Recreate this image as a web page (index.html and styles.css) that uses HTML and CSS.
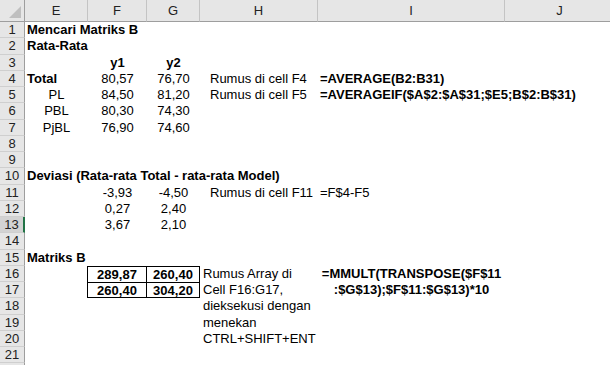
FILE: index.html
```html
<!DOCTYPE html>
<html>
<head>
<meta charset="utf-8">
<link rel="stylesheet" href="styles.css">
</head>
<body>
<div class="sheet">
  <div class="ch corner"><span class="tri"></span></div>
  <div class="ch">E</div><div class="ch">F</div><div class="ch">G</div><div class="ch">H</div><div class="ch">I</div><div class="ch">J</div>

  <div class="rh">1</div><div class="c b">Mencari Matriks B</div><div class="c"></div><div class="c"></div><div class="c"></div><div class="c"></div><div class="c"></div>
  <div class="rh">2</div><div class="c b">Rata-Rata</div><div class="c"></div><div class="c"></div><div class="c"></div><div class="c"></div><div class="c"></div>
  <div class="rh">3</div><div class="c"></div><div class="c b ctr">y1</div><div class="c b ctr">y2</div><div class="c"></div><div class="c"></div><div class="c"></div>
  <div class="rh">4</div><div class="c b">Total</div><div class="c ctr">80,57</div><div class="c ctr">76,70</div><div class="c ind">Rumus di cell F4</div><div class="c b">=AVERAGE(B2:B31)</div><div class="c"></div>
  <div class="rh">5</div><div class="c ctr">PL</div><div class="c ctr">84,50</div><div class="c ctr">81,20</div><div class="c ind">Rumus di cell F5</div><div class="c b">=AVERAGEIF($A$2:$A$31;$E5;B$2:B$31)</div><div class="c"></div>
  <div class="rh">6</div><div class="c ctr">PBL</div><div class="c ctr">80,30</div><div class="c ctr">74,30</div><div class="c"></div><div class="c"></div><div class="c"></div>
  <div class="rh">7</div><div class="c ctr">PjBL</div><div class="c ctr">76,90</div><div class="c ctr">74,60</div><div class="c"></div><div class="c"></div><div class="c"></div>
  <div class="rh">8</div><div class="c"></div><div class="c"></div><div class="c"></div><div class="c"></div><div class="c"></div><div class="c"></div>
  <div class="rh">9</div><div class="c"></div><div class="c"></div><div class="c"></div><div class="c"></div><div class="c"></div><div class="c"></div>
  <div class="rh">10</div><div class="c b">Deviasi (Rata-rata Total - rata-rata Model)</div><div class="c"></div><div class="c"></div><div class="c"></div><div class="c"></div><div class="c"></div>
  <div class="rh">11</div><div class="c"></div><div class="c ctr">-3,93</div><div class="c ctr">-4,50</div><div class="c ind">Rumus di cell F11</div><div class="c">=F$4-F5</div><div class="c"></div>
  <div class="rh">12</div><div class="c"></div><div class="c ctr">0,27</div><div class="c ctr">2,40</div><div class="c"></div><div class="c"></div><div class="c"></div>
  <div class="rh sel">13</div><div class="c"></div><div class="c ctr">3,67</div><div class="c ctr">2,10</div><div class="c"></div><div class="c"></div><div class="c"></div>
  <div class="rh">14</div><div class="c"></div><div class="c"></div><div class="c"></div><div class="c"></div><div class="c"></div><div class="c"></div>
  <div class="rh">15</div><div class="c b">Matriks B</div><div class="c"></div><div class="c"></div><div class="c"></div><div class="c"></div><div class="c"></div>
  <div class="rh">16</div><div class="c"></div><div class="c b ctr box tl">289,87</div><div class="c b ctr box tr">260,40</div><div class="c wrap span5">Rumus Array di<br>Cell F16:G17,<br>dieksekusi dengan<br>menekan<br>CTRL+SHIFT+ENT</div><div class="c b ctr wrap span2">=MMULT(TRANSPOSE($F$11<br>:$G$13);$F$11:$G$13)*10</div><div class="c"></div>
  <div class="rh">17</div><div class="c"></div><div class="c b ctr box bl">260,40</div><div class="c b ctr box br">304,20</div><div class="c"></div>
  <div class="rh">18</div><div class="c"></div><div class="c"></div><div class="c"></div><div class="c"></div><div class="c"></div>
  <div class="rh">19</div><div class="c"></div><div class="c"></div><div class="c"></div><div class="c"></div><div class="c"></div>
  <div class="rh">20</div><div class="c"></div><div class="c"></div><div class="c"></div><div class="c"></div><div class="c"></div>
  <div class="rh">21</div><div class="c"></div><div class="c"></div><div class="c"></div><div class="c"></div><div class="c"></div><div class="c"></div>
  <div class="rh"></div>
</div>
</body>
</html>
```
FILE: styles.css
```css
html, body {
  margin: 0;
  padding: 0;
  background: #fff;
  overflow: hidden;
}
body {
  font-family: "Liberation Sans", Arial, sans-serif;
  font-size: 13px;
  color: #000;
  width: 610px;
  height: 365px;
}
.sheet {
  display: grid;
  grid-template-columns: 25px 63px 59px 53px 118px 187px 110px;
  grid-template-rows: 22px repeat(21, 16.25px) 20px;
  width: 615px;
}
.ch {
  background: #e6e6e6;
  border-right: 1px solid #c4c4c4;
  border-bottom: 1px solid #9e9e9e;
  text-align: center;
  line-height: 22px;
  color: #222;
  box-sizing: border-box;
}
.corner {
  position: relative;
  border-right: 1px solid #9e9e9e;
}
.tri {
  position: absolute;
  right: 3px;
  bottom: 3px;
  width: 0;
  height: 0;
  border-left: 12px solid transparent;
  border-bottom: 12px solid #bfbfbf;
}
.rh {
  background: #e6e6e6;
  border-right: 1px solid #9e9e9e;
  border-bottom: 1px solid #cfcfcf;
  text-align: center;
  line-height: 16px;
  color: #222;
  box-sizing: border-box;
  overflow: hidden;
}
.rh.sel {
  background: #d3d3d3;
  border-right: 2px solid #217346;
}
.c {
  white-space: nowrap;
  padding: 0 2px;
  line-height: 16.25px;
  min-width: 0;
}
.b { font-weight: bold; }
.ctr { text-align: center; }
.ind { padding-left: 10px; }
.wrap {
  overflow: hidden;
}
.span5 { grid-row: span 5; padding-left: 3px; }
.span2 { grid-row: span 2; }
.box {
  box-sizing: border-box;
  border-top: 1px solid #000;
  border-right: 1px solid #000;
  line-height: 15px;
}
.tl { border-left: 1px solid #000; margin-left: -1px; }
.bl { border-left: 1px solid #000; margin-left: -1px; border-bottom: 1px solid #000; }
.br { border-bottom: 1px solid #000; }
```
